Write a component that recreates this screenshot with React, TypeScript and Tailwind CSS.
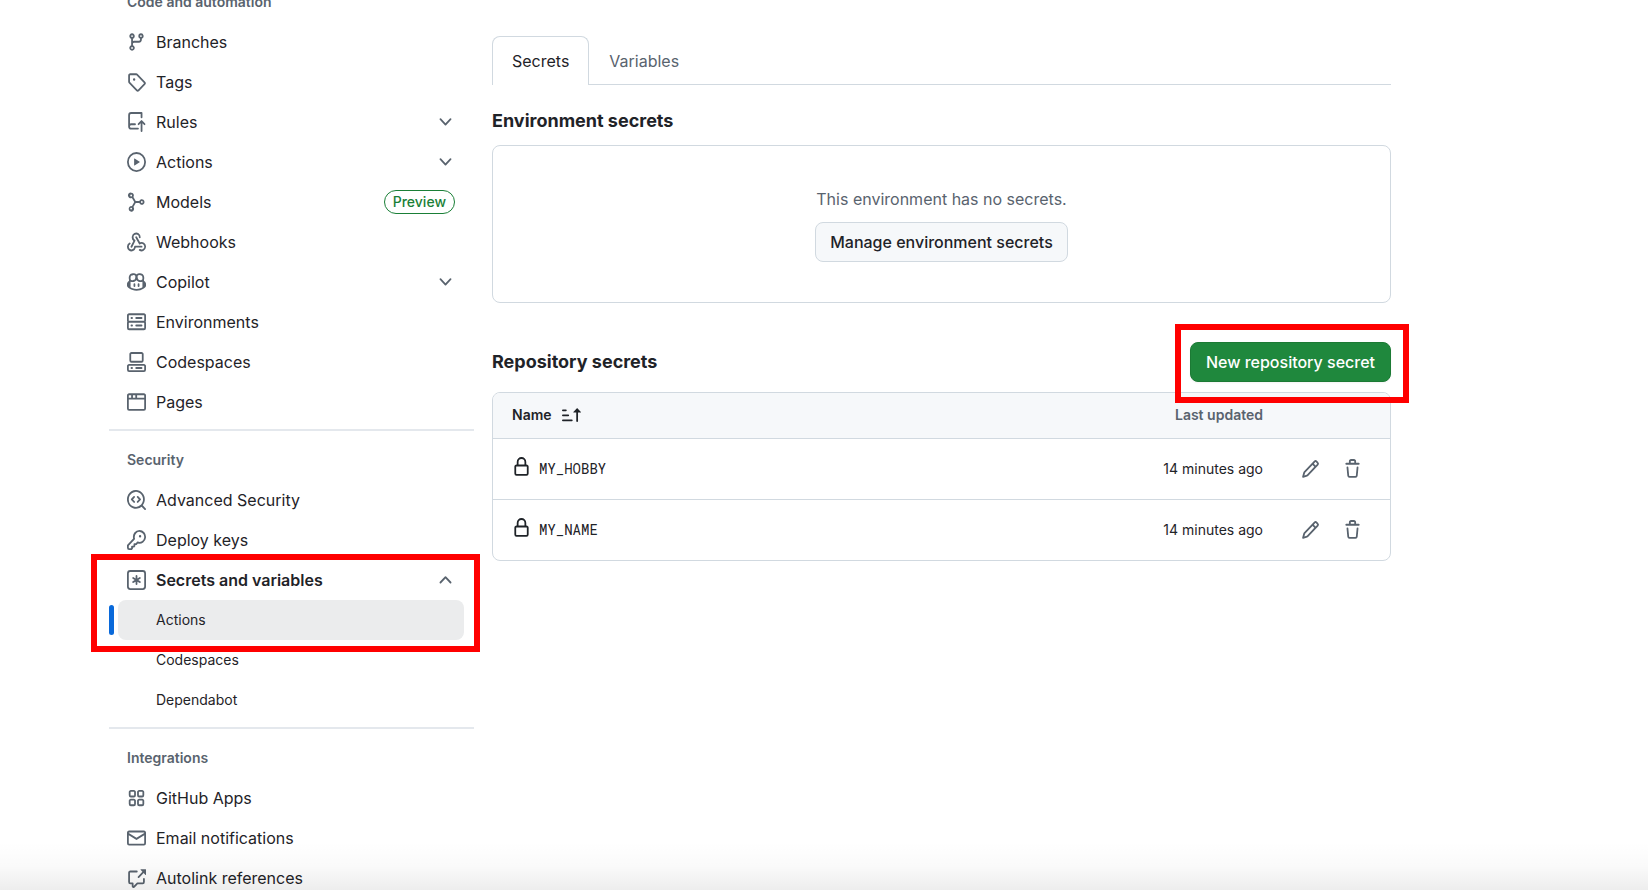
import React from "react";

type IconProps = { paths: string[]; className?: string };

const icons = {
  branch: ["M9.5 3.25a2.25 2.25 0 1 1 3 2.122V6A2.5 2.5 0 0 1 10 8.5H6a1 1 0 0 0-1 1v1.128a2.251 2.251 0 1 1-1.5 0V5.372a2.25 2.25 0 1 1 1.5 0v1.836A2.493 2.493 0 0 1 6 7h4a1 1 0 0 0 1-1v-.628A2.25 2.25 0 0 1 9.5 3.25Zm-6 0a.75.75 0 1 0 1.5 0 .75.75 0 0 0-1.5 0Zm8.25-.75a.75.75 0 1 0 0 1.5.75.75 0 0 0 0-1.5ZM4.25 12a.75.75 0 1 0 0 1.5.75.75 0 0 0 0-1.5Z"],
  tag: ["M1 7.775V2.75C1 1.784 1.784 1 2.75 1h5.025c.464 0 .91.184 1.238.513l6.25 6.25a1.75 1.75 0 0 1 0 2.474l-5.026 5.026a1.75 1.75 0 0 1-2.474 0l-6.25-6.25A1.752 1.752 0 0 1 1 7.775Zm1.5 0c0 .066.026.13.073.177l6.25 6.25a.25.25 0 0 0 .354 0l5.025-5.025a.25.25 0 0 0 0-.354l-6.25-6.25a.25.25 0 0 0-.177-.073H2.75a.25.25 0 0 0-.25.25ZM6 5a1 1 0 1 1 0 2 1 1 0 0 1 0-2Z"],
  rules: ["M1 2.5A2.5 2.5 0 0 1 3.5 0h8.75a.75.75 0 0 1 .75.75v3.5a.75.75 0 0 1-1.5 0V1.5h-8a1 1 0 0 0-1 1v6.708A2.493 2.493 0 0 1 3.5 9h3.25a.75.75 0 0 1 0 1.5H3.5a1 1 0 0 0 0 2h5.75a.75.75 0 0 1 0 1.5H3.5A2.5 2.5 0 0 1 1 11.5Zm13.23 7.79h-.001l-1.224-1.224v6.184a.75.75 0 0 1-1.5 0V9.066L10.28 10.29a.75.75 0 0 1-1.06-1.061l2.505-2.504a.75.75 0 0 1 1.06 0L15.29 9.23a.751.751 0 0 1-.018 1.042.751.751 0 0 1-1.042.018Z"],
  play: ["M8 0a8 8 0 1 1 0 16A8 8 0 0 1 8 0ZM1.5 8a6.5 6.5 0 1 0 13 0 6.5 6.5 0 0 0-13 0Zm4.879-2.773 4.264 2.559a.25.25 0 0 1 0 .428l-4.264 2.559A.25.25 0 0 1 6 10.559V5.442a.25.25 0 0 1 .379-.215Z"],
  models: ["M3.5 0.5a2.25 2.25 0 0 1 1.9 3.45L7.35 7.25h3.03a2.25 2.25 0 1 1 0 1.5H7.35L5.4 12.05a2.25 2.25 0 1 1-1.3-.75L6.1 8 4.1 4.7A2.25 2.25 0 1 1 3.5.5Zm0 1.5a.75.75 0 1 0 0 1.5.75.75 0 0 0 0-1.5Zm9 5.25a.75.75 0 1 0 0 1.5.75.75 0 0 0 0-1.5Zm-9 5.25a.75.75 0 1 0 0 1.5.75.75 0 0 0 0-1.5Z"],
  webhook: [
    "M5.5 4.25a2.25 2.25 0 0 1 4.5 0 .75.75 0 0 0 1.5 0 3.75 3.75 0 1 0-6.14 2.889l-2.272 4.258a.75.75 0 0 0 1.324.706L7 7.25a.75.75 0 0 0-.309-1.015A2.25 2.25 0 0 1 5.5 4.25Z",
    "M7.364 3.607a.75.75 0 0 1 1.03.257l2.608 4.349a3.75 3.75 0 1 1-.628 6.785.75.75 0 0 1 .752-1.299 2.25 2.25 0 1 0-.033-3.88.75.75 0 0 1-1.03-.256L7.107 4.636a.75.75 0 0 1 .257-1.03Z",
    "M2.9 8.776A.75.75 0 0 1 2.625 9.8 2.25 2.25 0 1 0 6 11.75a.75.75 0 0 1 .75-.751h5.5a.75.75 0 0 1 0 1.5H7.425a3.751 3.751 0 1 1-5.55-3.998.75.75 0 0 1 1.024.274Z",
  ],
  copilot: [
    "M7.998 15.035c-4.562 0-7.873-2.914-7.998-3.749V9.338c.085-.628.677-1.686 1.588-2.065.013-.07.024-.143.036-.218.029-.183.06-.384.126-.612-.201-.508-.254-1.084-.254-1.656 0-.87.128-1.769.693-2.484.579-.733 1.494-1.124 2.724-1.261 1.206-.134 2.262.034 2.944.765.05.053.096.108.139.165.044-.057.094-.112.143-.165.682-.731 1.738-.899 2.944-.765 1.23.137 2.145.528 2.724 1.261.566.715.693 1.614.693 2.484 0 .572-.053 1.148-.254 1.656.066.228.098.429.126.612.012.076.024.148.037.218.924.385 1.522 1.471 1.591 2.095v1.872c0 .766-3.351 3.795-8.002 3.795Zm0-1.485c2.28 0 4.584-1.11 5.002-1.433V7.862l-.023-.116c-.49.21-1.075.291-1.727.291-1.146 0-2.059-.327-2.71-.991A3.222 3.222 0 0 1 8 6.303a3.24 3.24 0 0 1-.544.743c-.65.664-1.563.991-2.71.991-.652 0-1.236-.081-1.727-.291l-.023.116v4.255c.419.323 2.722 1.433 5.002 1.433ZM6.762 2.83c-.193-.206-.637-.413-1.682-.297-1.019.113-1.479.404-1.713.7-.247.312-.369.789-.369 1.554 0 .793.129 1.171.308 1.371.162.181.519.379 1.442.379.853 0 1.339-.235 1.638-.54.315-.322.527-.827.617-1.553.117-.935-.037-1.395-.241-1.614Zm4.155-.297c-1.044-.116-1.488.091-1.681.297-.204.219-.359.679-.242 1.614.091.726.303 1.231.618 1.553.299.305.784.54 1.638.54.922 0 1.28-.198 1.442-.379.179-.2.308-.578.308-1.371 0-.765-.123-1.242-.37-1.554-.233-.296-.693-.587-1.713-.7Z",
    "M6.25 9.037a.75.75 0 0 1 .75.75v1.501a.75.75 0 0 1-1.5 0V9.787a.75.75 0 0 1 .75-.75Zm4.25.75v1.501a.75.75 0 0 1-1.5 0V9.787a.75.75 0 0 1 1.5 0Z",
  ],
  server: ["M1.75 1h12.5c.966 0 1.75.784 1.75 1.75v4c0 .372-.116.717-.314 1 .198.283.314.628.314 1v4a1.75 1.75 0 0 1-1.75 1.75H1.75A1.75 1.75 0 0 1 0 12.75v-4c0-.358.109-.707.314-1a1.739 1.739 0 0 1-.314-1v-4C0 1.784.784 1 1.75 1ZM1.5 2.75v4c0 .138.112.25.25.25h12.5a.25.25 0 0 0 .25-.25v-4a.25.25 0 0 0-.25-.25H1.75a.25.25 0 0 0-.25.25Zm.25 5.75a.25.25 0 0 0-.25.25v4c0 .138.112.25.25.25h12.5a.25.25 0 0 0 .25-.25v-4a.25.25 0 0 0-.25-.25ZM7 4.75A.75.75 0 0 1 7.75 4h4.5a.75.75 0 0 1 0 1.5h-4.5A.75.75 0 0 1 7 4.75ZM7.75 10h4.5a.75.75 0 0 1 0 1.5h-4.5a.75.75 0 0 1 0-1.5ZM3 4.75A.75.75 0 0 1 3.75 4h.5a.75.75 0 0 1 0 1.5h-.5A.75.75 0 0 1 3 4.75ZM3.75 10h.5a.75.75 0 0 1 0 1.5h-.5a.75.75 0 0 1 0-1.5Z"],
  codespaces: [
    "M0 11.25c0-.966.784-1.75 1.75-1.75h12.5c.966 0 1.75.784 1.75 1.75v3A1.75 1.75 0 0 1 14.25 16H1.75A1.75 1.75 0 0 1 0 14.25Zm2-9.5C2 .784 2.784 0 3.75 0h8.5C13.216 0 14 .784 14 1.75v5a1.75 1.75 0 0 1-1.75 1.75h-8.5A1.75 1.75 0 0 1 2 6.75Zm1.75-.25a.25.25 0 0 0-.25.25v5c0 .138.112.25.25.25h8.5a.25.25 0 0 0 .25-.25v-5a.25.25 0 0 0-.25-.25Zm-2 9.5a.25.25 0 0 0-.25.25v3c0 .138.112.25.25.25h12.5a.25.25 0 0 0 .25-.25v-3a.25.25 0 0 0-.25-.25Z",
    "M7 12.75a.75.75 0 0 1 .75-.75h4.5a.75.75 0 0 1 0 1.5h-4.5a.75.75 0 0 1-.75-.75Zm-4 0a.75.75 0 0 1 .75-.75h.5a.75.75 0 0 1 0 1.5h-.5a.75.75 0 0 1-.75-.75Z",
  ],
  browser: ["M0 2.75C0 1.784.784 1 1.75 1h12.5c.966 0 1.75.784 1.75 1.75v10.5A1.75 1.75 0 0 1 14.25 15H1.75A1.75 1.75 0 0 1 0 13.25ZM14.5 6h-13v7.25c0 .138.112.25.25.25h12.5a.25.25 0 0 0 .25-.25Zm-6-3.5v2h6V2.75a.25.25 0 0 0-.25-.25ZM5 2.5v2h2v-2Zm-3.25 0a.25.25 0 0 0-.25.25V4.5h2v-2Z"],
  codescan: [
    "M8.47 4.97a.75.75 0 0 0 0 1.06L9.94 7.5 8.47 8.97a.75.75 0 1 0 1.06 1.06l2-2a.75.75 0 0 0 0-1.06l-2-2a.75.75 0 0 0-1.06 0ZM6.53 6.03a.75.75 0 0 0-1.06-1.06l-2 2a.75.75 0 0 0 0 1.06l2 2a.75.75 0 1 0 1.06-1.06L5.06 7.5l1.47-1.47Z",
    "M12.246 13.307a7.5 7.5 0 1 1 1.06-1.06l2.474 2.473a.749.749 0 0 1-.326 1.275.749.749 0 0 1-.734-.215ZM1.5 7.5a6.002 6.002 0 0 0 3.608 5.504 6.002 6.002 0 0 0 6.486-1.117.748.748 0 0 1 .292-.293A6 6 0 1 0 1.5 7.5Z",
  ],
  key: ["M10.5 0a5.499 5.499 0 1 1-1.288 10.848l-.932.932a.749.749 0 0 1-.53.22H7v.75a.749.749 0 0 1-.22.53l-.5.5a.749.749 0 0 1-.53.22H5v.75a.749.749 0 0 1-.22.53l-.5.5a.749.749 0 0 1-.53.22h-2A1.75 1.75 0 0 1 0 14.25v-2c0-.199.079-.389.22-.53l4.932-4.932A5.5 5.5 0 0 1 10.5 0Zm-4 5.5c-.001.431.069.86.205 1.269a.75.75 0 0 1-.181.768L1.5 12.56v1.69c0 .138.112.25.25.25h1.69l.06-.06v-1.19a.75.75 0 0 1 .75-.75h1.19l.06-.06v-1.19a.75.75 0 0 1 .75-.75h1.19l1.023-1.025a.75.75 0 0 1 .768-.18A4 4 0 1 0 6.5 5.5ZM11 6a1 1 0 1 1 0-2 1 1 0 0 1 0 2Z"],
  asterisk: [
    "M0 2.75A2.75 2.75 0 0 1 2.75 0h10.5A2.75 2.75 0 0 1 16 2.75v10.5A2.75 2.75 0 0 1 13.25 16H2.75A2.75 2.75 0 0 1 0 13.25ZM2.75 1.5c-.69 0-1.25.56-1.25 1.25v10.5c0 .69.56 1.25 1.25 1.25h10.5c.69 0 1.25-.56 1.25-1.25V2.75c0-.69-.56-1.25-1.25-1.25Z",
    "M8 4a.75.75 0 0 1 .75.75V6.7l1.69-.975a.75.75 0 0 1 .75 1.3L9.5 8l1.69.975a.75.75 0 0 1-.75 1.3L8.75 9.3v1.95a.75.75 0 0 1-1.5 0V9.3l-1.69.975a.75.75 0 0 1-.75-1.3L6.5 8l-1.69-.975a.75.75 0 0 1 .75-1.3l1.69.975V4.75A.75.75 0 0 1 8 4Z",
  ],
  apps: ["M3.25 1.5h2.5c.966 0 1.75.784 1.75 1.75v2.5A1.75 1.75 0 0 1 5.75 7.5h-2.5A1.75 1.75 0 0 1 1.5 5.75v-2.5c0-.966.784-1.75 1.75-1.75ZM3 3.25v2.5c0 .138.112.25.25.25h2.5A.25.25 0 0 0 6 5.75v-2.5A.25.25 0 0 0 5.75 3h-2.5a.25.25 0 0 0-.25.25Zm7.25-1.75h2.5c.966 0 1.75.784 1.75 1.75v2.5a1.75 1.75 0 0 1-1.75 1.75h-2.5A1.75 1.75 0 0 1 8.5 5.75v-2.5c0-.966.784-1.75 1.75-1.75ZM10 3.25v2.5c0 .138.112.25.25.25h2.5a.25.25 0 0 0 .25-.25v-2.5a.25.25 0 0 0-.25-.25h-2.5a.25.25 0 0 0-.25.25ZM3.25 8.5h2.5c.966 0 1.75.784 1.75 1.75v2.5a1.75 1.75 0 0 1-1.75 1.75h-2.5a1.75 1.75 0 0 1-1.75-1.75v-2.5c0-.966.784-1.75 1.75-1.75ZM3 10.25v2.5c0 .138.112.25.25.25h2.5a.25.25 0 0 0 .25-.25v-2.5a.25.25 0 0 0-.25-.25h-2.5a.25.25 0 0 0-.25.25Zm7.25-1.75h2.5c.966 0 1.75.784 1.75 1.75v2.5a1.75 1.75 0 0 1-1.75 1.75h-2.5a1.75 1.75 0 0 1-1.75-1.75v-2.5c0-.966.784-1.75 1.75-1.75ZM10 10.25v2.5c0 .138.112.25.25.25h2.5a.25.25 0 0 0 .25-.25v-2.5a.25.25 0 0 0-.25-.25h-2.5a.25.25 0 0 0-.25.25Z"],
  mail: ["M1.75 2h12.5c.966 0 1.75.784 1.75 1.75v8.5A1.75 1.75 0 0 1 14.25 14H1.75A1.75 1.75 0 0 1 0 12.25v-8.5C0 2.784.784 2 1.75 2ZM1.5 12.251c0 .138.112.25.25.25h12.5a.25.25 0 0 0 .25-.25V5.809L8.38 9.397a.75.75 0 0 1-.76 0L1.5 5.809v6.442Zm13-8.181v-.32a.25.25 0 0 0-.25-.25H1.75a.25.25 0 0 0-.25.25v.32L8 7.88Z"],
  crossReference: ["M2.75 3.5a.25.25 0 0 0-.25.25v7.5c0 .138.112.25.25.25h2a.75.75 0 0 1 .75.75v2.19l2.72-2.72a.749.749 0 0 1 .53-.22h4.5a.25.25 0 0 0 .25-.25v-2.5a.75.75 0 0 1 1.5 0v2.5A1.75 1.75 0 0 1 13.25 13H9.06l-2.573 2.573A1.458 1.458 0 0 1 4 14.543V13H2.75A1.75 1.75 0 0 1 1 11.25v-7.5C1 2.784 1.784 2 2.75 2h5.5a.75.75 0 0 1 0 1.5ZM16 1.25v4.146a.25.25 0 0 1-.427.177L14.03 4.03l-3.75 3.75a.749.749 0 0 1-1.275-.326.749.749 0 0 1 .215-.734l3.75-3.75-1.543-1.543A.25.25 0 0 1 11.604 1h4.146a.25.25 0 0 1 .25.25Z"],
  lock: ["M4 4a4 4 0 0 1 8 0v2h.25c.966 0 1.75.784 1.75 1.75v5.5A1.75 1.75 0 0 1 12.25 15h-8.5A1.75 1.75 0 0 1 2 13.25v-5.5C2 6.784 2.784 6 3.75 6H4Zm8.25 3.5h-8.5a.25.25 0 0 0-.25.25v5.5c0 .138.112.25.25.25h8.5a.25.25 0 0 0 .25-.25v-5.5a.25.25 0 0 0-.25-.25ZM10.5 6V4a2.5 2.5 0 1 0-5 0v2Z"],
  pencil: ["M11.013 1.427a1.75 1.75 0 0 1 2.474 0l1.086 1.086a1.75 1.75 0 0 1 0 2.474l-8.61 8.61c-.21.21-.47.364-.756.445l-3.251.93a.75.75 0 0 1-.927-.928l.929-3.25c.081-.286.235-.547.445-.758l8.61-8.61Zm.176 4.823L9.75 4.81l-6.286 6.287a.253.253 0 0 0-.064.108l-.558 1.953 1.953-.558a.253.253 0 0 0 .108-.064Zm1.238-3.763a.25.25 0 0 0-.354 0L10.811 3.75l1.439 1.44 1.263-1.263a.25.25 0 0 0 0-.354Z"],
  trash: ["M11 1.75V3h2.25a.75.75 0 0 1 0 1.5H2.75a.75.75 0 0 1 0-1.5H5V1.75C5 .784 5.784 0 6.75 0h2.5C10.216 0 11 .784 11 1.75ZM4.496 6.675l.66 6.6a.25.25 0 0 0 .249.225h5.19a.25.25 0 0 0 .249-.225l.66-6.6a.75.75 0 0 1 1.492.149l-.66 6.6A1.748 1.748 0 0 1 10.595 15h-5.19a1.75 1.75 0 0 1-1.741-1.575l-.66-6.6a.75.75 0 1 1 1.492-.15ZM6.5 1.75V3h3V1.75a.25.25 0 0 0-.25-.25h-2.5a.25.25 0 0 0-.25.25Z"],
  sort: ["m12.927 2.573 3 3A.25.25 0 0 1 15.75 6H13.5v6.75a.75.75 0 0 1-1.5 0V6H9.75a.25.25 0 0 1-.177-.427l3-3a.25.25 0 0 1 .354 0ZM0 12.25a.75.75 0 0 1 .75-.75h7.5a.75.75 0 0 1 0 1.5H.75a.75.75 0 0 1-.75-.75Zm0-4a.75.75 0 0 1 .75-.75h4.5a.75.75 0 0 1 0 1.5H.75A.75.75 0 0 1 0 8.25Zm0-4a.75.75 0 0 1 .75-.75h2.5a.75.75 0 0 1 0 1.5H.75A.75.75 0 0 1 0 4.25Z"],
  chevronDown: ["M12.78 5.22a.749.749 0 0 1 0 1.06l-4.25 4.25a.749.749 0 0 1-1.06 0L3.22 6.28a.749.749 0 1 1 1.06-1.06L8 8.939l3.72-3.719a.749.749 0 0 1 1.06 0Z"],
  chevronUp: ["M3.22 10.53a.749.749 0 0 1 0-1.06l4.25-4.25a.749.749 0 0 1 1.06 0l4.25 4.25a.749.749 0 1 1-1.06 1.06L8 6.811 4.28 10.53a.749.749 0 0 1-1.06 0Z"],
};

function Icon({ paths, className = "text-[#59636e]" }: IconProps) {
  return (
    <svg
      viewBox="0 0 16 16"
      preserveAspectRatio="none"
      fill="currentColor"
      aria-hidden="true"
      className={`h-5 w-[19px] shrink-0 ${className}`}
    >
      {paths.map((d) => (
        <path key={d} d={d} fillRule="evenodd" />
      ))}
    </svg>
  );
}

type NavEntry = {
  label: string;
  icon: string[];
  expandable?: boolean;
  badge?: string;
};

const automation: NavEntry[] = [
  { label: "Branches", icon: icons.branch },
  { label: "Tags", icon: icons.tag },
  { label: "Rules", icon: icons.rules, expandable: true },
  { label: "Actions", icon: icons.play, expandable: true },
  { label: "Models", icon: icons.models, badge: "Preview" },
  { label: "Webhooks", icon: icons.webhook },
  { label: "Copilot", icon: icons.copilot, expandable: true },
  { label: "Environments", icon: icons.server },
  { label: "Codespaces", icon: icons.codespaces },
  { label: "Pages", icon: icons.browser },
];

const security: NavEntry[] = [
  { label: "Advanced Security", icon: icons.codescan },
  { label: "Deploy keys", icon: icons.key },
];

const integrations: NavEntry[] = [
  { label: "GitHub Apps", icon: icons.apps },
  { label: "Email notifications", icon: icons.mail },
  { label: "Autolink references", icon: icons.crossReference },
];

const secrets = [
  { name: "MY_HOBBY", updated: "14 minutes ago" },
  { name: "MY_NAME", updated: "14 minutes ago" },
];

const rowClass = "flex h-10 w-full items-center gap-2.5 pr-[19px] pl-[18px] text-left";

function NavRow({ entry }: { entry: NavEntry }) {
  if (entry.expandable) {
    return (
      <li>
        <button type="button" aria-expanded="false" className={rowClass}>
          <Icon paths={entry.icon} />
          <span className="flex-1">{entry.label}</span>
          <Icon paths={icons.chevronDown} />
        </button>
      </li>
    );
  }
  return (
    <li>
      <a href="#" className={rowClass}>
        <Icon paths={entry.icon} />
        <span className="flex-1">{entry.label}</span>
        {entry.badge && (
          <span className="flex h-6 items-center rounded-full border border-[#1a7f37] px-2 text-sm font-medium text-[#1a7f37]">
            {entry.badge}
          </span>
        )}
      </a>
    </li>
  );
}

function GroupTitle({ children }: { children: React.ReactNode }) {
  return (
    <h3 className="flex h-10 items-center pl-[18px] text-sm font-semibold text-[#59636e]">{children}</h3>
  );
}

function Divider() {
  return <hr className="mt-[7px] mb-[9px] border-t-2 border-[#e4e8ed]" />;
}

function Sidebar() {
  return (
    <nav aria-label="Repository settings" className="-mt-[18px] w-[365px] shrink-0">
      <GroupTitle>Code and automation</GroupTitle>
      <ul>
        {automation.map((e) => (
          <NavRow key={e.label} entry={e} />
        ))}
      </ul>
      <Divider />
      <GroupTitle>Security</GroupTitle>
      <ul>
        {security.map((e) => (
          <NavRow key={e.label} entry={e} />
        ))}
        <li>
          <div className="relative">
            <button type="button" aria-expanded="true" className={`${rowClass} font-semibold`}>
              <Icon paths={icons.asterisk} />
              <span className="flex-1">Secrets and variables</span>
              <Icon paths={icons.chevronUp} />
            </button>
            <a href="#" aria-current="page" className="flex h-10 items-center text-sm">
              <span className="h-[30px] w-[5px] rounded-full bg-[#0969da]" />
              <span className="mr-2.5 ml-1 flex h-10 flex-1 items-center rounded-lg bg-[#ebeced] pl-[38px]">
                Actions
              </span>
            </a>
            <div className="pointer-events-none absolute -top-1.5 -right-1.5 -bottom-3 -left-[18px] border-6 border-[#ff0000]" />
          </div>
          <a href="#" className="flex h-10 items-center pl-[47px] text-sm">
            Codespaces
          </a>
          <a href="#" className="flex h-10 items-center pl-[47px] text-sm">
            Dependabot
          </a>
        </li>
      </ul>
      <Divider />
      <GroupTitle>Integrations</GroupTitle>
      <ul>
        {integrations.map((e) => (
          <NavRow key={e.label} entry={e} />
        ))}
      </ul>
    </nav>
  );
}

function SecretsTable() {
  return (
    <div className="mt-2.5 overflow-hidden rounded-lg border border-[#d1d9e0]">
      <table className="w-full border-collapse text-sm">
        <thead className="bg-[#f6f8fa]">
          <tr className="h-[45px]">
            <th scope="col" className="pl-[19px] text-left font-semibold">
              <button type="button" className="flex items-center gap-2.5">
                Name
                <Icon paths={icons.sort} className="text-[#1f2328]" />
              </button>
            </th>
            <th scope="col" className="text-right font-semibold text-[#59636e]">
              Last updated
            </th>
            <th scope="col" aria-label="Manage" className="w-[127px]" />
          </tr>
        </thead>
        <tbody>
          {secrets.map((s) => (
            <tr key={s.name} className="h-[61px] border-t border-[#d1d9e0]">
              <td className="pl-[19px]">
                <span className="flex items-center gap-2">
                  <span className="pb-1">
                    <Icon paths={icons.lock} className="text-[#1f2328]" />
                  </span>
                  <code className="font-[Roboto_Mono,'Liberation_Mono',monospace] text-sm">{s.name}</code>
                </span>
              </td>
              <td className="text-right">{s.updated}</td>
              <td>
                <span className="flex items-center justify-end gap-[23px] pr-7">
                  <button type="button" aria-label={`Edit ${s.name}`}>
                    <Icon paths={icons.pencil} />
                  </button>
                  <button type="button" aria-label={`Delete ${s.name}`}>
                    <Icon paths={icons.trash} />
                  </button>
                </span>
              </td>
            </tr>
          ))}
        </tbody>
      </table>
    </div>
  );
}

export default function App() {
  return (
    <div className="relative flex h-screen gap-[18px] overflow-hidden bg-white pr-[257px] pl-[109px] font-['Inter',sans-serif] text-base text-[#1f2328]">
      <Sidebar />
      <main className="min-w-0 flex-1 pt-9">
        <div role="tablist" className="flex h-[49px] border-b border-[#d1d9e0]">
          <button
            type="button"
            role="tab"
            aria-selected="true"
            className="h-[49px] rounded-t-lg border border-b-0 border-[#d1d9e0] bg-white px-[19px]"
          >
            Secrets
          </button>
          <button type="button" role="tab" aria-selected="false" className="h-[49px] border-t border-transparent px-5 text-[#59636e]">
            Variables
          </button>
        </div>

        <section>
          <h2 className="mt-[22px] text-lg leading-7 font-bold">Environment secrets</h2>
          <div className="mt-2.5 flex h-[158px] flex-col items-center justify-center gap-[11px] rounded-lg border border-[#d1d9e0]">
            <p className="text-[#59636e]">This environment has no secrets.</p>
            <button
              type="button"
              className="h-10 rounded-lg border border-[#d1d9e0] bg-[#f6f8fa] px-3.5 font-medium"
            >
              Manage environment secrets
            </button>
          </div>
        </section>

        <section className="mt-[39px]">
          <div className="flex items-center justify-between">
            <h2 className="text-lg leading-7 font-bold">Repository secrets</h2>
            <div className="relative">
              <button
                type="button"
                className="h-10 rounded-lg border border-[#1c7a35] bg-[#1f883d] px-[15px] font-medium text-white shadow-xs"
              >
                New repository secret
              </button>
              <div className="pointer-events-none absolute -top-[18px] -right-[18px] -bottom-[21px] -left-[15px] border-6 border-[#ff0000]" />
            </div>
          </div>
          <SecretsTable />
        </section>
      </main>
      <div className="pointer-events-none absolute inset-x-0 bottom-0 h-12 bg-linear-to-b from-transparent via-black/2 to-black/7" />
    </div>
  );
}
